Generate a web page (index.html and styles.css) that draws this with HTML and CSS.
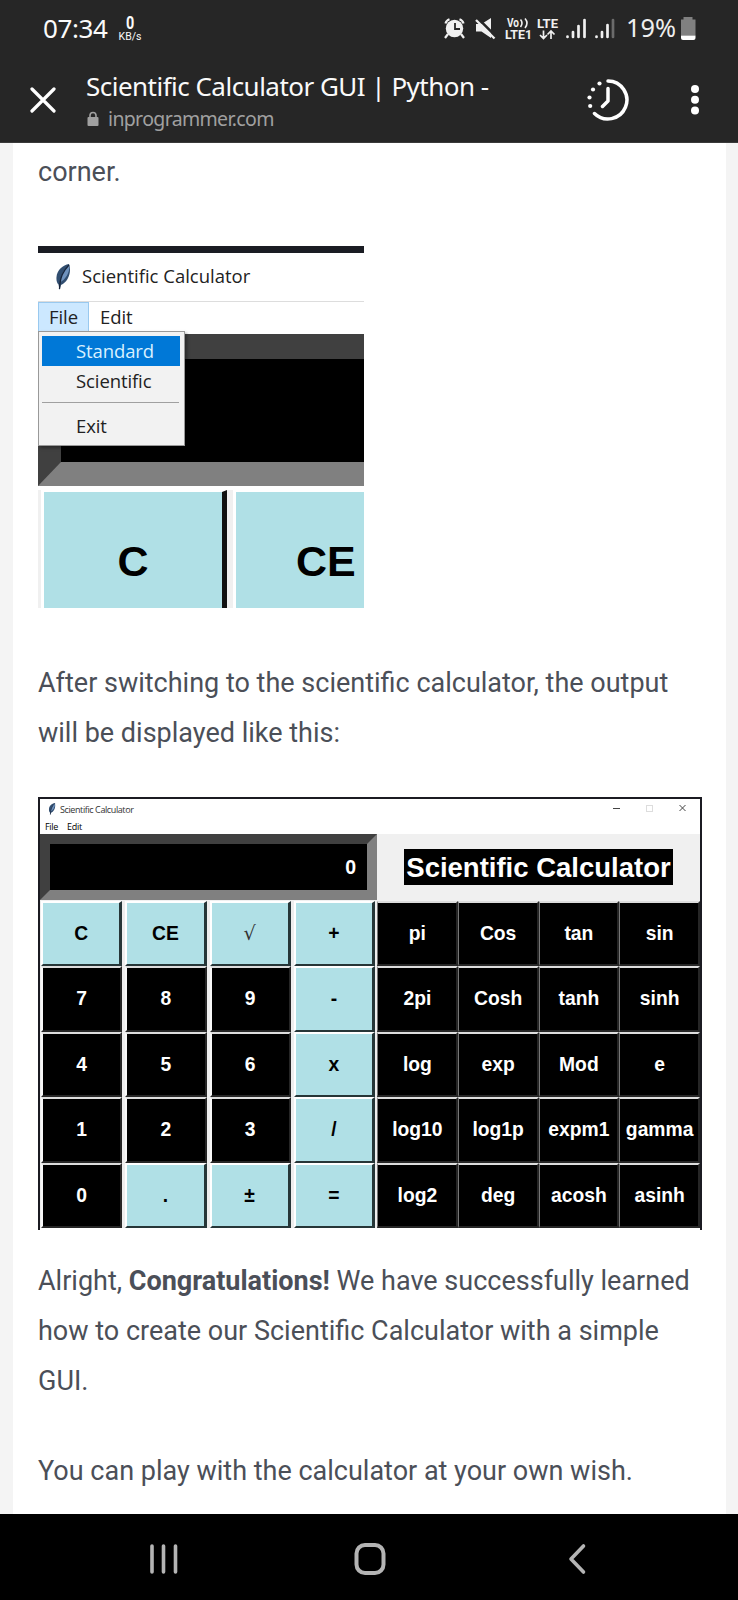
FILE: index.html
```
<!DOCTYPE html>
<html lang="en">
<head>
<meta charset="utf-8">
<title>Scientific Calculator GUI | Python</title>
<link rel="stylesheet" href="styles.css">
</head>
<body>
<svg class="defs" width="0" height="0" aria-hidden="true">
  <symbol id="feather" viewBox="0 0 16 26">
    <path d="M14 0C8 1 2 6 1.500 13c-.3 4 .5 6 2 7.500L4.500 26 6 21C13 18 17 8 14 0z" fill="#314e70"/>
    <path d="M14 1C9 5 6 11 5.500 18c4-2 10-9 8.500-17z" fill="#6f92bd"/>
    <path d="M14 1C8 7 5 13 4.500 25" stroke="#17243a" stroke-width="1.300" fill="none"/>
  </symbol>
</svg>
<header class="top">
  <div class="status">
    <span class="clock">07:34</span>
    <span class="speed"><b>0</b><span>KB/s</span></span>
    <svg class="status-icons" width="256" height="36" viewBox="442 9 256 36">
      <g fill="#f0f0f0">
        <circle cx="454.500" cy="28.500" r="8.700"/>
        <path d="M448 34l-3 4M461 34l3 4M445.500 23.500c.5-2 2-3.500 4-4.200M463.500 23.500c-.5-2-2-3.500-4-4.200" stroke="#f0f0f0" stroke-width="2.200" fill="none"/>
        <path d="M455 23v6h5" stroke="#262626" stroke-width="1.800" fill="none"/>
        <path d="M476 24h5.500L491 18v20l-9.500-6.500H476z"/>
        <path d="M477.500 18l20 20" stroke="#262626" stroke-width="2.500"/>
        <path d="M476 20l18.500 18.500" stroke="#f0f0f0" stroke-width="2.300"/>
      </g>
      <g class="net" fill="#f0f0f0">
        <text x="507" y="27" textLength="12" lengthAdjust="spacingAndGlyphs">Vo</text>
        <path d="M520.500 19.500q3 3.500 0 7.500M525 18.500q4 4.500 0 9.500" stroke="#f0f0f0" stroke-width="1.600" fill="none"/>
        <text x="505" y="39" textLength="27" lengthAdjust="spacingAndGlyphs">LTE1</text>
        <text x="537" y="27.500" textLength="21" lengthAdjust="spacingAndGlyphs">LTE</text>
        <path d="M543.500 30.500v8M540 35l3.500 3.500L547 35M551 39v-8M547.500 34.500l3.500-3.500 3.500 3.500" stroke="#f0f0f0" stroke-width="1.700" fill="none"/>
      </g>
      <g stroke="#f0f0f0" stroke-width="2.700" stroke-linecap="round">
        <path d="M567.500 37v-.5M573 37v-5M578.500 37v-11M584.500 37v-17M596.500 37v-.5M602 37v-5M607.500 37v-12"/>
        <path d="M613 37v-17" stroke="#6b6b6b"/>
      </g>
      <text class="percent" x="626" y="37" textLength="50" lengthAdjust="spacingAndGlyphs">19%</text>
      <path d="M683.500 17h9v2.500h3v16h-14.500v-16h2.500z" fill="#808080"/>
      <path d="M681 35.500h14.500v2.500q0 2-2 2h-10.500q-2 0-2-2z" fill="#fff"/>
    </svg>
  </div>
  <div class="bar">
    <svg class="close" width="26" height="26" viewBox="0 0 26 26"><path d="M2 2l22 22M24 2L2 24" stroke="#fff" stroke-width="3.200" stroke-linecap="round"/></svg>
    <div class="page-info">
      <div class="page-title">Scientific Calculator GUI | Python -</div>
      <div class="host">
        <svg width="12" height="16" viewBox="0 0 12 16"><path d="M3 7V4.500a3 3 0 0 1 6 0V7" fill="none" stroke="#a0a0a0" stroke-width="1.600"/><rect x=".5" y="6" width="11" height="9" rx="1" fill="#a0a0a0"/></svg>
        <span>inprogrammer.com</span>
      </div>
    </div>
    <svg class="history" width="44" height="44" viewBox="0 0 44 44">
      <path d="M22 3a19 19 0 1 1-13.500 32.500M22 10.500V23l-5.500 5.500" fill="none" stroke="#fff" stroke-width="3.500" stroke-linecap="round" stroke-linejoin="round"/>
      <g fill="#fff"><circle cx="13.500" cy="5.500" r="2.100"/><circle cx="7" cy="11.500" r="2.100"/><circle cx="3.500" cy="19.500" r="2.100"/><circle cx="4.200" cy="28" r="2.100"/></g>
    </svg>
    <svg class="more" width="10" height="32" viewBox="0 0 10 32" fill="#fff"><circle cx="5" cy="5" r="4"/><circle cx="5" cy="15.800" r="4"/><circle cx="5" cy="26.500" r="4"/></svg>
  </div>
</header>
<main class="page">
  <article class="article">
    <p>corner.</p>
    <figure class="shot-menu">
      <div class="backdrop"></div>
      <div class="win-title"><svg width="16" height="26"><use href="#feather"/></svg><span>Scientific Calculator</span></div>
      <div class="menubar"><span class="open">File</span><span class="edit">Edit</span></div>
      <div class="screen"></div>
      <div class="keys-crop"><div class="big-key">C</div><div class="big-key ce">CE</div></div>
      <div class="dropdown">
        <div class="item active">Standard</div>
        <div class="item">Scientific</div>
        <div class="rule"></div>
        <div class="item">Exit</div>
      </div>
    </figure>
    <p>After switching to the scientific calculator, the output<br>will be displayed like this:</p>
    <figure class="shot-calc">
      <div class="mini-title">
        <svg width="8" height="12"><use href="#feather"/></svg><span>Scientific Calculator</span>
        <svg class="controls" width="74" height="10" viewBox="0 0 74 10" fill="none" stroke="#444" stroke-width="1"><path d="M0 5.500h7M66.500 2l6 6M72.500 2l-6 6"/><rect x="33.500" y="2.500" width="6" height="6" stroke="#ddd"/></svg>
      </div>
      <div class="mini-menu"><span>File</span><span>Edit</span></div>
      <div class="calc-head">
        <div class="display">0</div>
        <div class="banner"><span>Scientific Calculator</span></div>
      </div>
      <div class="pads">
        <div class="pad basic">
          <b class="aqua">C</b><b class="aqua">CE</b><b class="aqua root">√</b><b class="aqua">+</b>
          <b>7</b><b>8</b><b>9</b><b class="aqua">-</b>
          <b>4</b><b>5</b><b>6</b><b class="aqua">x</b>
          <b>1</b><b>2</b><b>3</b><b class="aqua">/</b>
          <b>0</b><b class="aqua">.</b><b class="aqua">±</b><b class="aqua">=</b>
        </div>
        <div class="pad sci">
          <b>pi</b><b>Cos</b><b>tan</b><b>sin</b>
          <b>2pi</b><b>Cosh</b><b>tanh</b><b>sinh</b>
          <b>log</b><b>exp</b><b>Mod</b><b>e</b>
          <b>log10</b><b>log1p</b><b>expm1</b><b>gamma</b>
          <b>log2</b><b>deg</b><b>acosh</b><b>asinh</b>
        </div>
      </div>
    </figure>
    <p>Alright, <strong>Congratulations!</strong> We have successfully learned<br>how to create our Scientific Calculator with a simple<br>GUI.</p>
    <p class="wish">You can play with the calculator at your own wish.</p>
  </article>
</main>
<nav class="nav">
  <svg width="738" height="86" viewBox="0 0 738 86" fill="none" stroke="#b4b4b4" stroke-linecap="round">
    <path d="M152 32v26M163.500 32v26M175.500 32v26" stroke-width="3.600"/>
    <rect x="356.500" y="31" width="27" height="28" rx="8.500" stroke-width="4"/>
    <path d="M583.500 32L571 45l12.500 13" stroke-width="3.600" stroke-linejoin="round"/>
  </svg>
</nav>
</body>
</html>
```
FILE: styles.css
```
* { box-sizing: border-box; }
body { margin: 0; width: 738px; height: 1600px; overflow: hidden; background: #f4f4f4; font-family: Roboto, sans-serif; display: flex; flex-direction: column; }
.defs { position: absolute; }
p, figure { margin: 0; }
svg { display: block; flex: none; }

.top { height: 143px; flex: none; background: #262626; border-bottom: 1px solid #3a3a3a; color: #fafafa; }
.status { height: 56px; display: flex; align-items: flex-start; padding-left: 43px; }
.clock { font: 26px/36px "Noto Sans", sans-serif; letter-spacing: -0.4px; width: 66px; padding-top: 10px; white-space: nowrap; }
.speed { width: 22px; margin-left: 10px; padding-top: 15px; display: flex; flex-direction: column; align-items: center; font: 10.500px/12px Roboto, sans-serif; }
.speed b { font-size: 18px; line-height: 16px; transform: scaleX(.8); }
.status-icons { margin: 9px 0 0 301px; overflow: visible; }
.net { font: 700 12.500px Roboto, sans-serif; }
.percent { font: 26px "Noto Sans", sans-serif; fill: #eee; }
.bar { height: 86px; display: flex; align-items: flex-start; }
.close { margin: 31px 0 0 30px; }
.page-info { width: 451px; margin: 12px 0 0 30px; }
.page-title { font: 26px/36px "Noto Sans", sans-serif; letter-spacing: -0.52px; white-space: nowrap; }
.host { display: flex; align-items: center; gap: 9px; padding-left: 1px; font: 19.500px/29px "Noto Sans", sans-serif; letter-spacing: -0.65px; color: #a0a0a0; }
.history { margin: 22px 0 0 49px; }
.more { margin: 28px 0 0 60px; }

.page { flex: 1; padding: 0 12px 0 13px; }
.article { height: 100%; background: #fff; padding: 4px 24px 0 25px; color: #4b4f58; font-size: 27px; line-height: 50px; white-space: nowrap; }

.shot-menu { position: relative; width: 326px; height: 362px; margin: 49px 0 50px; background: #fff; color: #222; font-family: "Open Sans", sans-serif; overflow: hidden; }
.backdrop { height: 7px; background: #1a1c23; }
.win-title { height: 48px; display: flex; align-items: center; padding-left: 17px; gap: 11px; font-size: 18.500px; line-height: 24px; letter-spacing: 0; }
.win-title span { margin-top: -3px; }
.menubar { height: 32px; display: flex; border-top: 1px solid #ddd; font-size: 18.500px; line-height: 29px; letter-spacing: -0.1px; }
.open { width: 51px; height: 30px; background: #cce8ff; border: 1px solid #99c9ef; text-align: center; line-height: 28px; }
.edit { margin-left: 11px; }
.screen { height: 152px; margin-top: 1px; border: solid #404040; border-width: 25px 0 24px 23px; border-bottom-color: #808080; background: #000; }
.keys-crop { height: 122px; display: flex; gap: 6px; background: #f0f0f0; border-top: 4px solid #fff; padding-left: 3px; }
.big-key { flex: none; width: 186px; border: solid #fff; border-width: 2px 5px 0 3px; border-right-color: #111; background: #b0e0e6; color: #000; text-align: center; font: 700 43px/139px "Liberation Sans", Arial, sans-serif; }
.big-key.ce { width: 132px; border-right: 0; padding-left: 60px; text-align: left; }
.dropdown { position: absolute; left: 0; top: 85px; width: 147px; height: 115px; background: #f2f2f2; border: 1px solid #999; padding: 4px 4px 0 3px; font-size: 18.500px; box-shadow: 2px 2px 3px rgba(0,0,0,.35); letter-spacing: -0.1px; }
.item { height: 30px; line-height: 29px; padding-left: 34px; }
.active { background: #0078d7; color: #d9f0ff; }
.rule { height: 1px; background: #a0a0a0; margin: 6px 1px 8px 0; }

.shot-calc { width: 664px; height: 433px; margin: 39px 0 26px; border: solid #1b1b22; border-width: 2px 2px 0 2px; background: #fff; color: #000; }
.mini-title { height: 21px; display: flex; align-items: flex-start; padding: 4px 0 0 8px; gap: 4px; font: 9px/13px "Open Sans", sans-serif; letter-spacing: -.4px; color: #333; }
.controls { margin-left: auto; margin-right: 13px; }
.mini-menu { height: 14px; display: flex; gap: 9px; padding-left: 5px; font: 9px/14px "Open Sans", sans-serif; letter-spacing: -.3px; }
.calc-head { display: flex; height: 67px; background: #f0f0f0; }
.display { width: 337px; height: 66px; border: 10px solid; border-color: #404040 #808080 #808080 #404040; background: #000; color: #fff; text-align: right; padding-right: 11px; font: 700 19.500px/46px "Liberation Sans", Arial, sans-serif; }
.banner { flex: 1; display: flex; align-items: flex-start; padding: 15px 0 0 27px; font: 700 27.500px/37px "Liberation Sans", Arial, sans-serif; }
.banner span { background: #000; color: #fff; width: 269px; height: 36px; text-align: center; letter-spacing: 0; }
.pads { display: flex; height: 327px; }
.pad { display: grid; grid-template-columns: repeat(4, minmax(0, 1fr)); grid-template-rows: repeat(5, minmax(0, 1fr)); font: 700 19.300px/62px "Liberation Sans", Arial, sans-serif; text-align: center; }
.basic { width: 337px; padding: 0 2px 0 1px; column-gap: 3px; background: #eee; }
.pad b { background: #000; color: #fff; border: 2px solid #ddd; border-right-color: #262626; border-bottom-color: #262626; }
.basic b { border-left-color: #f8f8f8; }
.pad .aqua { background: #b0e0e6; color: #000; border-color: #fff #263638 #263638 #fff; border-right-width: 3px; }
.pad .root { font-family: "DejaVu Serif", serif; font-weight: 400; color: #333; }
.sci { width: 323px; background: #ddd; }
.sci b { border-left: 1px solid #777; padding-left: 1px; }

.wish { margin-top: 40px; }
.nav { height: 86px; flex: none; background: #000; }
```
